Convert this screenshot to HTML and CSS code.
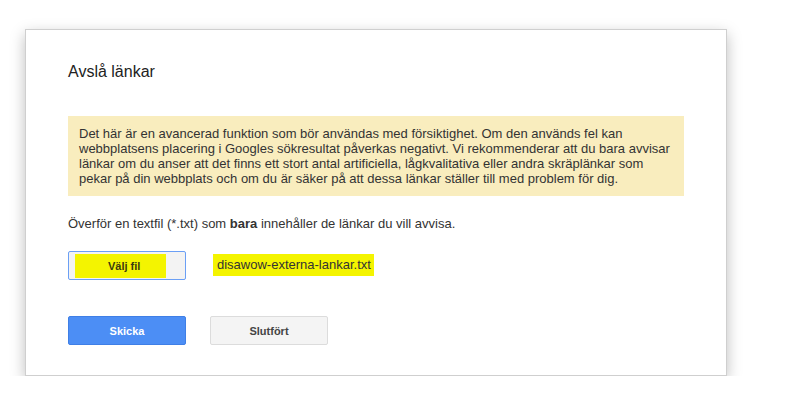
FILE: index.html
```html
<!DOCTYPE html>
<html lang="sv">
<head>
<meta charset="utf-8">
<title>Avslå länkar</title>
<link rel="stylesheet" href="styles.css">
</head>
<body>
<div class="page">
  <div class="dialog">
    <h1 class="title">Avslå länkar</h1>
    <div class="warning">
      Det här är en avancerad funktion som bör användas med försiktighet. Om den används fel kan<br>
      webbplatsens placering i Googles sökresultat påverkas negativt. Vi rekommenderar att du bara avvisar<br>
      länkar om du anser att det finns ett stort antal artificiella, lågkvalitativa eller andra skräplänkar som<br>
      pekar på din webbplats och om du är säker på att dessa länkar ställer till med problem för dig.
    </div>
    <p class="instr">Överför en textfil (*.txt) som <b>bara</b> innehåller de länkar du vill avvisa.</p>
    <div class="file-row">
      <button class="btn btn-file"><span class="mark mark-btn">Välj fil</span></button>
      <span class="mark mark-file">disawow-externa-lankar.txt</span>
    </div>
    <div class="actions">
      <button class="btn btn-primary">Skicka</button>
      <button class="btn btn-default">Slutfört</button>
    </div>
  </div>
</div>
</body>
</html>
```

FILE: styles.css
```css
html, body {
  margin: 0;
  padding: 0;
  background: #ffffff;
}
body {
  font-family: "Liberation Sans", Arial, sans-serif;
  color: #333;
}
.page {
  padding: 29px 0 0 25px;
}
.dialog {
  box-sizing: border-box;
  width: 702px;
  height: 347px;
  border: 1px solid #cfcfcf;
  background: #fff;
  box-shadow: 0 5px 14px rgba(0, 0, 0, 0.26);
  padding: 32px 42px 0 42px;
}
.title {
  margin: 0;
  font-size: 16px;
  font-weight: normal;
  line-height: 20px;
  color: #222;
}
.warning {
  margin-top: 34px;
  background: #f9edbe;
  padding: 10px 11px;
  font-size: 13px;
  line-height: 15px;
  color: #333;
  white-space: nowrap;
}
.instr {
  margin: 20px 0 0 0;
  font-size: 13px;
  line-height: 15px;
  color: #333;
}
.instr b {
  font-weight: bold;
}
.file-row {
  margin-top: 20px;
  display: flex;
  align-items: center;
  gap: 27px;
}
.btn {
  box-sizing: border-box;
  width: 118px;
  height: 29px;
  font-family: "Liberation Sans", Arial, sans-serif;
  font-size: 11px;
  font-weight: bold;
  border-radius: 2px;
  padding: 0;
  display: flex;
  align-items: center;
  justify-content: center;
}
.btn-file {
  background: #f3f3f3;
  border: 1px solid #6b9ff5;
  color: #333;
}
.mark {
  background: #f4f400;
}
.mark-btn {
  display: inline-block;
  box-sizing: border-box;
  width: 91px;
  line-height: 24px;
  padding: 0 20px 0 33px;
  margin-right: 13px;
  text-align: left;
  color: #3a3a10;
}
.mark-file {
  display: inline-block;
  font-size: 13px;
  line-height: 20px;
  padding: 1px 3px 1px 4px;
  color: #333;
  margin-top: -1px;
}
.actions {
  margin-top: 36px;
  display: flex;
  gap: 24px;
}
.btn-primary {
  background: #4c8ef5;
  border: 1px solid #3f7fe6;
  color: #fff;
}
.btn-default {
  background: #f4f4f4;
  border: 1px solid #dcdcdc;
  color: #444;
}
```
